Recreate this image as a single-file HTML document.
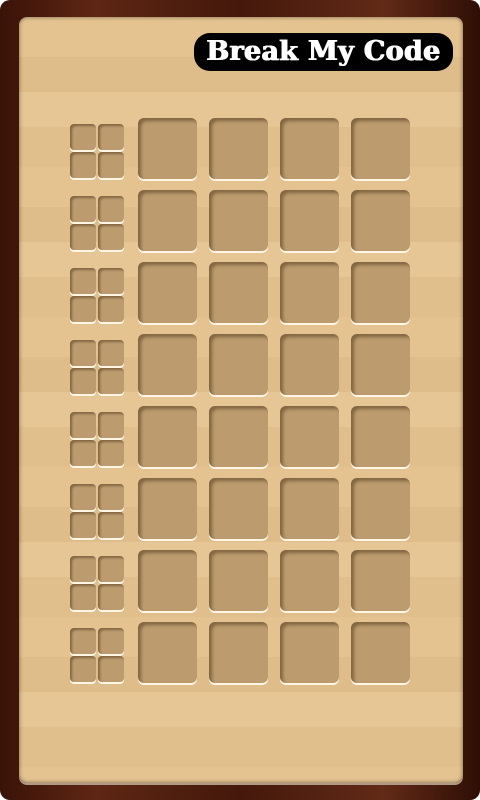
<!DOCTYPE html><html><head><style>
*{margin:0;padding:0;box-sizing:border-box}
body{width:480px;height:800px;background:#fff;overflow:hidden;position:relative;font-family:"Liberation Serif",serif}
.frame{position:absolute;left:0;top:0;width:480px;height:800px;border-radius:10px;background:linear-gradient(90deg,#3a1308,#5e2614 20%,#44180b 50%,#622a17 80%,#2f0e06);}
.wood{position:absolute;left:19px;top:17px;width:444px;height:766px;border-radius:8px;
background:repeating-linear-gradient(180deg,#e4c390 0 40px,#dfbd8a 40px 75px,#e6c694 75px 110px,#e0bf8c 110px 150px);
box-shadow:inset 0 0 4px rgba(0,0,0,.5),0 2px 0 #b09a86}
.row{position:absolute;left:0;width:480px;height:62px}
.b{position:absolute;top:0;width:59px;height:61px;border-radius:6px;background:#bc9c6e;
box-shadow:inset 3px 3px 3px rgba(60,35,10,.45),0 2px 0 #fff6e6}
.s{position:absolute;width:26px;height:26px;border-radius:4px;background:#bc9c6e;
box-shadow:inset 2px 2px 2px rgba(60,35,10,.45),0 2px 0 #fff6e6}
.title{position:absolute;left:194px;top:33px;width:259px;height:38px;border-radius:16px;background:#000;}
.title span{position:absolute;left:0;top:0;width:259px;text-align:center;color:#fff;font-weight:bold;font-size:27px;line-height:38px;letter-spacing:0.3px;font-family:"DejaVu Serif","Liberation Serif",serif;text-shadow:0.6px 0 #fff,-0.6px 0 #fff}
</style></head><body>
<div class="frame"></div>
<div class="wood"></div>
<div class="title"><span>Break My Code</span></div>

<div class="row" style="top:118px"><div class="s" style="left:70px;top:6px"></div><div class="s" style="left:98px;top:6px"></div><div class="s" style="left:70px;top:34px"></div><div class="s" style="left:98px;top:34px"></div><div class="b" style="left:138px"></div><div class="b" style="left:209px"></div><div class="b" style="left:280px"></div><div class="b" style="left:351px"></div></div>
<div class="row" style="top:190px"><div class="s" style="left:70px;top:6px"></div><div class="s" style="left:98px;top:6px"></div><div class="s" style="left:70px;top:34px"></div><div class="s" style="left:98px;top:34px"></div><div class="b" style="left:138px"></div><div class="b" style="left:209px"></div><div class="b" style="left:280px"></div><div class="b" style="left:351px"></div></div>
<div class="row" style="top:262px"><div class="s" style="left:70px;top:6px"></div><div class="s" style="left:98px;top:6px"></div><div class="s" style="left:70px;top:34px"></div><div class="s" style="left:98px;top:34px"></div><div class="b" style="left:138px"></div><div class="b" style="left:209px"></div><div class="b" style="left:280px"></div><div class="b" style="left:351px"></div></div>
<div class="row" style="top:334px"><div class="s" style="left:70px;top:6px"></div><div class="s" style="left:98px;top:6px"></div><div class="s" style="left:70px;top:34px"></div><div class="s" style="left:98px;top:34px"></div><div class="b" style="left:138px"></div><div class="b" style="left:209px"></div><div class="b" style="left:280px"></div><div class="b" style="left:351px"></div></div>
<div class="row" style="top:406px"><div class="s" style="left:70px;top:6px"></div><div class="s" style="left:98px;top:6px"></div><div class="s" style="left:70px;top:34px"></div><div class="s" style="left:98px;top:34px"></div><div class="b" style="left:138px"></div><div class="b" style="left:209px"></div><div class="b" style="left:280px"></div><div class="b" style="left:351px"></div></div>
<div class="row" style="top:478px"><div class="s" style="left:70px;top:6px"></div><div class="s" style="left:98px;top:6px"></div><div class="s" style="left:70px;top:34px"></div><div class="s" style="left:98px;top:34px"></div><div class="b" style="left:138px"></div><div class="b" style="left:209px"></div><div class="b" style="left:280px"></div><div class="b" style="left:351px"></div></div>
<div class="row" style="top:550px"><div class="s" style="left:70px;top:6px"></div><div class="s" style="left:98px;top:6px"></div><div class="s" style="left:70px;top:34px"></div><div class="s" style="left:98px;top:34px"></div><div class="b" style="left:138px"></div><div class="b" style="left:209px"></div><div class="b" style="left:280px"></div><div class="b" style="left:351px"></div></div>
<div class="row" style="top:622px"><div class="s" style="left:70px;top:6px"></div><div class="s" style="left:98px;top:6px"></div><div class="s" style="left:70px;top:34px"></div><div class="s" style="left:98px;top:34px"></div><div class="b" style="left:138px"></div><div class="b" style="left:209px"></div><div class="b" style="left:280px"></div><div class="b" style="left:351px"></div></div>
</body></html>
